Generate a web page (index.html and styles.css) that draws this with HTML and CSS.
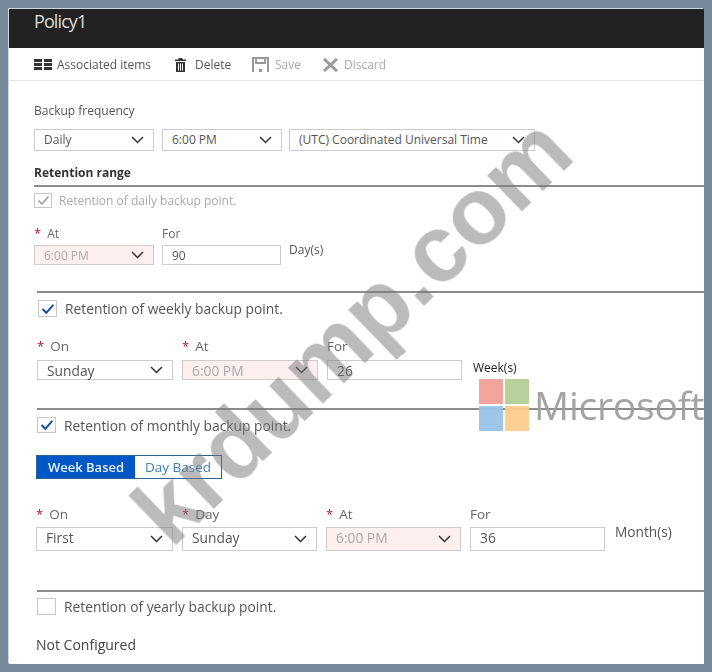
FILE: index.html
```html
<!DOCTYPE html>
<html lang="en">
<head>
<meta charset="utf-8">
<title>Policy1</title>
<link rel="stylesheet" href="styles.css">
</head>
<body>
<main class="panel">
  <div class="blurred">
    <header class="title-bar"><h1 class="title">Policy1</h1></header>
    <nav class="toolbar">
      <span class="tool tool-items">
        <svg class="icon" width="18" height="11" viewBox="0 0 18 11"><path fill="#333" d="M0 0h8v3H0zM10 0h8v3h-8zM0 4h8v3H0zM10 4h8v3h-8zM0 8h8v3H0zM10 8h8v3h-8z"/></svg>
        Associated items
      </span>
      <span class="tool tool-delete">
        <svg class="icon" width="11" height="14" viewBox="0 0 11 14"><path fill="#333" d="M3.500 0h4v1.500H11V3H0V1.500h3.500zM1 4h9v10H1zM3 5.500v7h1v-7zM5 5.500v7h1v-7zM7 5.500v7h1v-7z" fill-rule="evenodd"/></svg>
        Delete
      </span>
      <span class="tool tool-save disabled">
        <svg class="icon" width="17" height="16" viewBox="0 0 17 16"><path fill="none" stroke="#999" stroke-width="2" d="M1 15V1h15v14M4 1v5h9V1"/><rect x="7" y="12" width="3" height="3" fill="#999"/></svg>
        Save
      </span>
      <span class="tool tool-discard disabled">
        <svg class="icon" width="15" height="14" viewBox="0 0 15 14"><path fill="none" stroke="#999" stroke-width="3" d="M1 1l13 12M14 1L1 13"/></svg>
        Discard
      </span>
    </nav>

    <section class="content">
      <p class="freq-label">Backup frequency</p>
      <div class="row freq-row">
        <div class="select w120">Daily<svg class="chev" width="13" height="8" viewBox="0 0 13 8"><path d="M1 1l5.500 5.500L12 1" fill="none" stroke="#333" stroke-width="1.500"/></svg></div>
        <div class="select w120">6:00 PM<svg class="chev" width="13" height="8" viewBox="0 0 13 8"><path d="M1 1l5.500 5.500L12 1" fill="none" stroke="#333" stroke-width="1.500"/></svg></div>
        <div class="select w246">(UTC) Coordinated Universal Time<svg class="chev" width="13" height="8" viewBox="0 0 13 8"><path d="M1 1l5.500 5.500L12 1" fill="none" stroke="#333" stroke-width="1.500"/></svg></div>
      </div>
      <h2 class="range-title">Retention range</h2>
      <hr class="rule rule-range">

      <div class="check check-daily muted">
        <span class="box box-muted"><svg width="13" height="11" viewBox="0 0 13 11"><path d="M1.500 5.500l3.500 3.500 6.500-7.500" fill="none" stroke="#999" stroke-width="1.500"/></svg></span>
        Retention of daily backup point.
      </div>
      <div class="row row-daily">
        <div class="field">
          <label class="flabel"><span class="req">*</span>At</label>
          <div class="select pink w120 h20">6:00 PM<svg class="chev" width="13" height="8" viewBox="0 0 13 8"><path d="M1 1l5.500 5.500L12 1" fill="none" stroke="#333" stroke-width="1.500"/></svg></div>
        </div>
        <div class="field">
          <label class="flabel">For</label>
          <div class="input w119 h20">90</div>
        </div>
        <span class="unit unit-day">Day(s)</span>
      </div>
    </section>

    <section class="content wide">
      <hr class="rule rule-weekly">
      <div class="check large check-weekly">
        <span class="box"><svg width="14" height="12" viewBox="0 0 14 12"><path d="M1.500 6l3.800 3.800 7-8" fill="none" stroke="#0f4f9c" stroke-width="2"/></svg></span>
        Retention of weekly backup point.
      </div>
      <div class="row row-weekly">
        <div class="field">
          <label class="flabel large tall"><span class="req">*</span>On</label>
          <div class="select large w136 h20">Sunday<svg class="chev" width="13" height="8" viewBox="0 0 13 8"><path d="M1 1l5.500 5.500L12 1" fill="none" stroke="#333" stroke-width="1.500"/></svg></div>
        </div>
        <div class="field">
          <label class="flabel large tall"><span class="req">*</span>At</label>
          <div class="select large pink w136 h20">6:00 PM<svg class="chev" width="13" height="8" viewBox="0 0 13 8"><path d="M1 1l5.500 5.500L12 1" fill="none" stroke="#333" stroke-width="1.500"/></svg></div>
        </div>
        <div class="field">
          <label class="flabel large tall">For</label>
          <div class="input large w135 h20">26</div>
        </div>
        <span class="unit unit-week">Week(s)</span>
      </div>

      <hr class="rule rule-monthly">
      <div class="check large check-monthly">
        <span class="box box-short"><svg width="14" height="12" viewBox="0 0 14 12"><path d="M1.500 6l3.800 3.800 7-8" fill="none" stroke="#0f4f9c" stroke-width="2"/></svg></span>
        Retention of monthly backup point.
      </div>
      <div class="toggle">
        <span class="toggle-on">Week Based</span>
        <span class="toggle-off">Day Based</span>
      </div>
      <div class="row row-monthly">
        <div class="field">
          <label class="flabel large"><span class="req">*</span>On</label>
          <div class="select large w137 h24">First<svg class="chev" width="13" height="8" viewBox="0 0 13 8"><path d="M1 1l5.500 5.500L12 1" fill="none" stroke="#333" stroke-width="1.500"/></svg></div>
        </div>
        <div class="field">
          <label class="flabel large"><span class="req">*</span>Day</label>
          <div class="select large w135 h24">Sunday<svg class="chev" width="13" height="8" viewBox="0 0 13 8"><path d="M1 1l5.500 5.500L12 1" fill="none" stroke="#333" stroke-width="1.500"/></svg></div>
        </div>
        <div class="field">
          <label class="flabel large"><span class="req">*</span>At</label>
          <div class="select large pink w135 h24">6:00 PM<svg class="chev" width="13" height="8" viewBox="0 0 13 8"><path d="M1 1l5.500 5.500L12 1" fill="none" stroke="#333" stroke-width="1.500"/></svg></div>
        </div>
        <div class="field">
          <label class="flabel large">For</label>
          <div class="input large w135 h24">36</div>
        </div>
        <span class="unit unit-month">Month(s)</span>
      </div>

      <hr class="rule rule-yearly">
      <div class="check large check-yearly">
        <span class="box"></span>
        Retention of yearly backup point.
      </div>
      <p class="not-configured">Not Configured</p>
    </section>
  </div>

  <div class="ms-logo">
    <div class="ms-squares"><i class="sq sq-r"></i><i class="sq sq-g"></i><i class="sq sq-b"></i><i class="sq sq-y"></i></div>
    <span class="ms-word">Microsoft</span>
  </div>
  <div class="watermark">krdump.com</div>
</main>
</body>
</html>
```

FILE: styles.css
```css
* { box-sizing: border-box; }
html, body { margin: 0; height: 100%; }
body {
  background: #76889a;
  padding: 9px 8px 8px 9px;
  font-family: "Open Sans", "Noto Sans", sans-serif;
  font-size: 12px;
  color: #555;
  overflow: hidden;
}
.panel {
  position: relative;
  width: 695px;
  height: 655px;
  background: #fff;
  overflow: hidden;
  box-shadow: -1px -1px 0 #cfd6dc;
}
.blurred { filter: blur(0.45px); }

.title-bar { height: 39px; background: #222; padding-left: 25px; }
.title { margin: 0; font-size: 18px; font-weight: 400; line-height: 25px; letter-spacing: -0.9px; color: #dcdcdc; }

.toolbar {
  display: flex;
  align-items: center;
  height: 33px;
  padding: 1px 0 0 25px;
  border-bottom: 1px solid #e4e4e4;
  white-space: nowrap;
  color: #555;
}
.tool { display: flex; align-items: center; }
.tool-items { width: 141px; }
.tool-items .icon { margin-right: 5px; }
.tool-delete { width: 77px; }
.tool-delete .icon { margin-right: 9px; }
.tool-save { width: 71px; }
.tool-save .icon { margin-right: 6px; }
.tool-discard .icon { margin-right: 6px; }
.disabled { color: #aaa; }

.content { padding-left: 25px; }
.wide { padding-left: 28px; }
.freq-label { margin: 22px 0 0; line-height: 16px; }
.row { display: flex; align-items: flex-start; }
.freq-row { margin-top: 10px; gap: 8px; }
.freq-row .w246 { margin-left: -1px; }
.range-title { margin: 14px 0 0; font-size: 12px; line-height: 16px; font-weight: 700; color: #333; }

.rule { display: block; margin: 0; border: 0; border-top: 2px solid #8c8c8c; }
.rule-range { margin-top: 4px; }
.rule-weekly { margin-top: 26px; }
.rule-monthly { margin-top: 28px; }
.rule-yearly { margin-top: 39px; }

.select, .input {
  display: flex;
  align-items: center;
  height: 22px;
  padding: 0 0 2px 9px;
  border: 1px solid #ccc;
  background: #fff;
  color: #555;
  white-space: nowrap;
}
.select { justify-content: space-between; padding-right: 9px; }
.chev { margin-top: 2px; }
.pink { background: #fdeef0; color: #aaa; }
.large { font-size: 13.8px; }
.w119 { width: 119px; }
.w120 { width: 120px; }
.w135 { width: 135px; }
.w136 { width: 136px; }
.w137 { width: 137px; }
.w246 { width: 246px; }
.h20 { height: 20px; padding-bottom: 0; }
.h20 .chev { margin-top: 0; }
.h24 { height: 24px; padding-bottom: 4px; }
.h24 .chev { margin-top: 4px; }

.check { display: flex; align-items: center; }
.check.muted { color: #aaa; }
.check .box { margin-right: 8px; }
.check.muted .box { margin-right: 7px; }
.box {
  display: flex;
  align-items: center;
  justify-content: center;
  width: 19px;
  height: 17px;
  border: 1px solid #c8c8c8;
  background: #fff;
  flex: none;
}
.box-muted { width: 18px; height: 15px; }
.box-short { height: 16px; }
.check-daily { margin-top: 6px; height: 15px; }
.check-weekly { margin-top: 7px; height: 17px; margin-left: 1px; }
.check-monthly { margin-top: 7px; height: 16px; }
.check-yearly { margin-top: 6px; height: 17px; }

.field { display: flex; flex-direction: column; }
.flabel { display: block; height: 14px; line-height: 14px; margin-bottom: 4px; color: #666; }
.flabel.large { margin-bottom: 6px; font-size: 13.5px; }
.flabel.large.tall { margin-bottom: 7px; }
.req { color: #b8123a; margin-right: 6px; font-size: 13px; line-height: 0; }

.row-daily { margin-top: 19px; gap: 8px; }
.row-weekly { margin-top: 22px; gap: 9px; }
.row-monthly { margin-top: 28px; gap: 9px; margin-left: -1px; }
.unit { color: #555; line-height: 16px; white-space: nowrap; }
.unit-day { margin-top: 15px; margin-left: 0; }
.unit-week { margin-top: 21px; margin-left: 2px; color: #222; }
.unit-month { margin-top: 17px; margin-left: 1px; font-size: 13.7px; }

.toggle {
  display: flex;
  width: 186px;
  height: 24px;
  margin-top: 22px;
  margin-left: -1px;
  border: 1px solid #2d5f8f;
  font-size: 13px;
  font-weight: 600;
  line-height: 22px;
}
.toggle-on { width: 98px; background: #0058c8; color: #e6eefa; text-align: center; }
.toggle-off { flex: 1; color: #3f7fb5; text-align: center; font-weight: 400; font-size: 13.5px; }

.not-configured { margin: 22px 0 0 -1px; font-size: 14px; line-height: 16px; color: #444; }

.ms-logo {
  position: absolute;
  left: 470px;
  top: 370px;
  display: flex;
  align-items: center;
  opacity: 0.95;
}
.ms-squares {
  display: grid;
  grid-template-columns: 24px 24px;
  grid-template-rows: 25px 25px;
  gap: 2px;
  margin-right: 5px;
}
.sq { display: block; }
.sq-r { background: #f1a095; }
.sq-g { background: #b5cf95; }
.sq-b { background: #98c3e8; }
.sq-y { background: #fdcd8d; }
.ms-word { font-size: 39px; line-height: 46px; color: #a0a0a0; letter-spacing: -0.2px; white-space: nowrap; }

.watermark {
  position: absolute;
  left: 73px;
  top: 301px;
  width: 480px;
  font-family: "Liberation Sans", Arial, sans-serif;
  font-size: 94px;
  font-weight: 700;
  line-height: 100px;
  text-align: center;
  white-space: nowrap;
  color: rgba(120, 120, 120, 0.5);
  transform: rotate(-44deg);
}
```
